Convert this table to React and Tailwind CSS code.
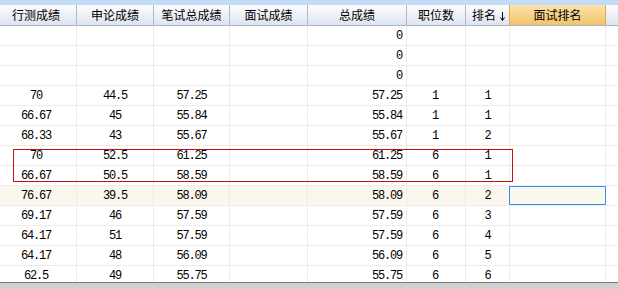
import React from "react";

const rows = [
  ["", "", "", "", "0", "", ""],
  ["", "", "", "", "0", "", ""],
  ["", "", "", "", "0", "", ""],
  ["70", "44.5", "57.25", "", "57.25", "1", "1"],
  ["66.67", "45", "55.84", "", "55.84", "1", "1"],
  ["68.33", "43", "55.67", "", "55.67", "1", "2"],
  ["70", "52.5", "61.25", "", "61.25", "6", "1"],
  ["66.67", "50.5", "58.59", "", "58.59", "6", "1"],
  ["76.67", "39.5", "58.09", "", "58.09", "6", "2"],
  ["69.17", "46", "57.59", "", "57.59", "6", "3"],
  ["64.17", "51", "57.59", "", "57.59", "6", "4"],
  ["64.17", "48", "56.09", "", "56.09", "6", "5"],
  ["62.5", "49", "55.75", "", "55.75", "6", "6"],
];

const HeadCell = ({ className, children }) => (
  <div
    className={
      "flex items-center justify-center h-full border-r border-[#aabbd0] bg-linear-to-b from-[#fdfdfe] to-[#dde4ee] " +
      className
    }
  >
    {children}
  </div>
);

export default function App() {
  return (
    <div className="relative w-[618px] h-[289px] overflow-hidden bg-white flex flex-col text-black">
      <div className="h-[5px] bg-[#c4dbf8] shrink-0" />
      <div
        className="flex h-[21px] shrink-0 border-b border-[#a6b6ca] text-[12px] leading-none"
        style={{ fontFamily: '"Noto Sans CJK SC", sans-serif' }}
      >
        <HeadCell className="w-[77px] pr-[4px]">行测成绩</HeadCell>
        <HeadCell className="w-[77px]">申论成绩</HeadCell>
        <HeadCell className="w-[76px]">笔试总成绩</HeadCell>
        <HeadCell className="w-[78px]">面试成绩</HeadCell>
        <HeadCell className="w-[99px]">总成绩</HeadCell>
        <HeadCell className="w-[59px]">职位数</HeadCell>
        <div className="flex items-center justify-center h-full w-[43px] bg-linear-to-b from-[#fdfdfe] to-[#dde4ee] gap-[4px] pl-[2px]">
          <span>排名</span>
          <svg width="5" height="9" viewBox="0 0 5 9" className="mt-[2px]">
            <path d="M2.5 0 V8" stroke="#000" strokeWidth="1" />
            <path d="M0.5 5.5 L2.5 8.5 L4.5 5.5" fill="none" stroke="#000" strokeWidth="1" />
          </svg>
        </div>
        <div className="flex items-center justify-center h-full w-[97px] border-x border-[#eea54c] bg-linear-to-b from-[#fae2ac] to-[#f3c466]">
          面试排名
        </div>
        <div className="flex-1 h-full bg-linear-to-b from-[#fdfdfe] to-[#dde4ee]" />
      </div>
      <div
        className="flex-1 overflow-hidden text-[12px] tracking-[-1.2px] leading-none"
        style={{ fontFamily: '"Liberation Mono", monospace' }}
      >
        {rows.map((r, i) => (
          <div
            key={i}
            className={
              "flex h-[20px] shrink-0 border-b border-[#ececec] " +
              (i === 8 ? "bg-[#fcf7ec]" : "bg-white")
            }
          >
            <div className="w-[77px] flex items-center justify-center pr-[4px] border-r border-[#ececec]">{r[0]}</div>
            <div className="w-[77px] flex items-center justify-center border-r border-[#ececec]">{r[1]}</div>
            <div className="w-[76px] flex items-center justify-center border-r border-[#ececec]">{r[2]}</div>
            <div className="w-[78px] flex items-center justify-center border-r border-[#ececec]">{r[3]}</div>
            <div className="w-[99px] flex items-center justify-end pr-[4px] border-r border-[#ececec]">{r[4]}</div>
            <div className="w-[59px] flex items-center justify-center pr-[2px] border-r border-[#ececec]">{r[5]}</div>
            <div className="w-[44px] flex items-center justify-center border-r border-[#ececec]">{r[6]}</div>
            <div className="relative w-[96px] border-r border-[#ececec]">
              {i === 8 && (
                <div className="absolute left-[-1px] right-[-1px] top-0 bottom-0 border border-[#3392f5]" />
              )}
            </div>
            <div className={"flex-1 " + (i === 8 ? "bg-white" : "")} />
          </div>
        ))}
      </div>
      <div className="h-[7px] shrink-0 border-t border-[#7c7c7c] bg-[#d0d0d0]" />
      <div className="absolute left-[13px] top-[149px] w-[500px] h-[33px] border border-[#c80f0f] pointer-events-none" />
    </div>
  );
}
